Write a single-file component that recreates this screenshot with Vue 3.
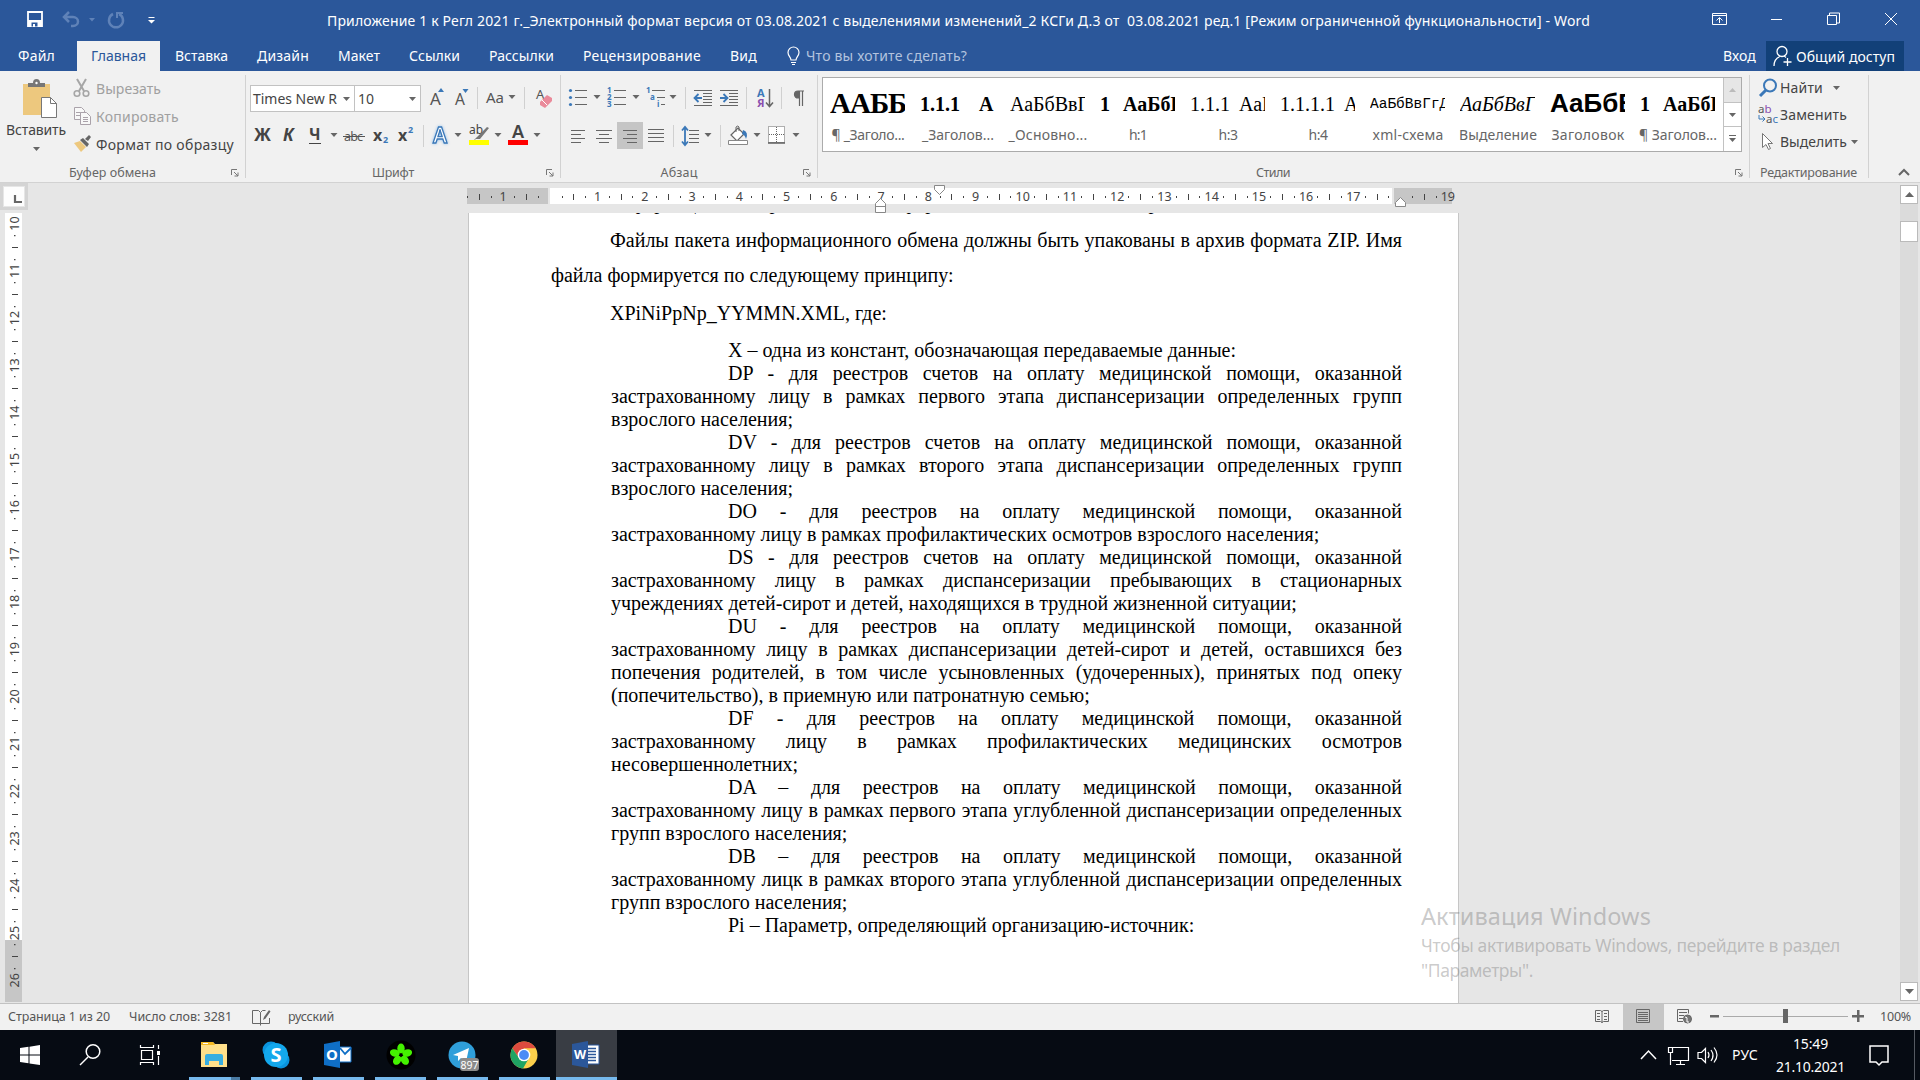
<script setup>
// Lays items out one after another: margin is the gap to the previous item's end
function flow(items, start) {
  let end = start
  return items.map(([x, w, v]) => {
    const item = { gap: x - end, w, v }
    end = x + w
    return item
  })
}
const box = (i) => ({ marginLeft: i.gap + 'px', width: i.w + 'px' })

// Tunes letter spacing so that a label takes exactly the given width
const vFit = {
  mounted(el, { value }) {
    const range = document.createRange()
    range.selectNodeContents(el)
    const natural = range.getBoundingClientRect().width
    el.style.letterSpacing = (value - natural) / el.textContent.length + 'px'
  },
}

const caret = '<path d="M-3.5 12h7l-3.5 4z" fill="#666"/>'
const sep = '<path d="M.5 4v22" stroke="#d0d0d0"/>'
const lines = (ys, x1, x2) => ys.map((y) => `<path d="M${x1} ${y + 0.5}H${x2}" stroke="#666"/>`).join('')
const sans = 'font-family="Noto Sans, sans-serif"'

const fontRow1 = flow([
  [431, 1, `<text y="22" font-size="17" fill="#555" ${sans}>A</text><path d="M8 9l3-4 3 4z" fill="#3b78b8"/>`],
  [456, 1, `<text y="22" font-size="15.500" fill="#555" ${sans}>A</text><path d="M7.500 6h6l-3 4z" fill="#3b78b8"/>`],
  [478, 1, sep],
  [487, 1, `<text y="20" font-size="15" fill="#555" ${sans}>Aa</text>`],
  [513, 1, caret],
  [525, 1, sep],
  [537, 1, `<text y="16" font-size="13" fill="#555" ${sans}>A</text><path d="M4 19l7-7 5 3v3l-7 7-5-3z" fill="#ea8a9a"/><path d="M6 17l5 5" stroke="#fff"/>`],
], 422)
const fontRow2 = flow([
  [254, 1, `<text y="20" font-size="17" font-weight="700" fill="#444" textLength="18" ${sans}>Ж</text>`],
  [283, 1, `<text y="20" font-size="17" font-weight="700" font-style="italic" fill="#444" ${sans}>К</text>`],
  [309, 1, `<text y="19" font-size="16" font-weight="700" fill="#444" ${sans}>Ч</text><path d="M0 22.500h12" stroke="#444"/>`],
  [334, 1, caret],
  [344, 1, `<text y="20" font-size="12.500" fill="#555" textLength="19" ${sans}>abc</text><path d="M-1 15.500h22" stroke="#555"/>`],
  [373, 1, `<text y="20" font-size="16" font-weight="700" fill="#444" ${sans}>x</text><text x="10" y="22" font-size="9" font-weight="700" fill="#3b78b8" ${sans}>2</text>`],
  [398, 1, `<text y="20" font-size="16" font-weight="700" fill="#444" ${sans}>x</text><text x="10" y="12" font-size="9" font-weight="700" fill="#3b78b8" ${sans}>2</text>`],
  [423, 1, sep],
  [433, 1, `<text y="22" font-size="21" font-weight="600" fill="#fff" stroke="#3b78b8" stroke-width="1.300" filter="drop-shadow(0 0 1.500px #8fbdea)" ${sans}>A</text>`],
  [458, 1, caret],
  [469, 1, `<text y="13" font-size="12" fill="#444" ${sans}>ab</text><path d="M18 6l2 1-9 11-4 0-3 2 4-4z" fill="#777"/><path d="M0 19h20v5H0z" fill="#ff0"/>`],
  [498, 1, caret],
  [508, 1, `<text x="4" y="17" font-size="18" font-weight="600" fill="#444" ${sans}>A</text><path d="M0 19h20v5H0z" fill="#f00"/>`],
  [537, 1, caret],
], 246)

const dot = (y) => `<circle cx="1.500" cy="${y + 0.5}" r="1.600" fill="#3b78b8"/>`
const num = (x, y, t) => `<text x="${x}" y="${y}" font-size="8" font-weight="700" fill="#3b78b8" ${sans}>${t}</text>`
const blockLines = lines([7, 22], 0, 18) + lines([10, 13, 16, 19], 9, 18)
const paraRow1 = flow([
  [569, 1, dot(7) + dot(14) + dot(21) + lines([7, 14, 21], 6, 18)],
  [597, 1, caret],
  [608, 1, num(-1, 10, 1) + num(-1, 17, 2) + num(-1, 24, 3) + lines([7, 14, 21], 6, 18)],
  [636, 1, caret],
  [647, 1, num(-1, 10, 1) + num(3, 17, 'a') + num(10, 24, 'i') + lines([7], 5, 18) + lines([14], 10, 18) + lines([21], 14, 18)],
  [673, 1, caret],
  [685, 1, sep],
  [694, 1, blockLines + '<path d="M8 15H1M4.500 11l-4 4 4 4" stroke="#3b78b8" stroke-width="1.800" fill="none"/>'],
  [720, 1, blockLines + '<path d="M0 15h7M3.500 11l4 4-4 4" stroke="#3b78b8" stroke-width="1.800" fill="none"/>'],
  [746, 1, sep],
  [757, 1, `<text y="14" font-size="11" font-weight="700" fill="#3b78b8" ${sans}>А</text><text y="24" font-size="11" font-weight="700" fill="#8a4fae" ${sans}>Я</text><path d="M12.500 6v17M9 19.500l3.500 4 3.500-4" stroke="#666" stroke-width="1.500" fill="none"/>`],
  [781, 1, sep],
  [793, 1, '<path d="M11 8H5a3.500 3.500 0 000 7h1M6.500 8v15M9.500 8v15" stroke="#666" stroke-width="1.200" fill="none"/><path d="M5 8h2v7H5a3.500 3.500 0 010-7z" fill="#666"/>'],
], 561)
const paraRow2 = flow([
  [571, 1, lines([9, 17], 0, 14) + lines([13, 21], 0, 10)],
  [596, 1, lines([9, 17], 0, 16) + lines([13, 21], 3, 13)],
  [617, 26, '<path d="M0 1h26v27H0z" fill="#c5c5c5"/>' + lines([9, 17], 6, 20) + lines([13, 21], 10, 20)],
  [648, 1, lines([8, 12, 16, 20], 0, 16)],
  [673, 1, sep],
  [682, 1, lines([9, 13, 17, 21], 7, 17) + '<path d="M3 7v16M0 9.500L3 6l3 3.500M0 20.500L3 24l3-3.500" stroke="#3b78b8" stroke-width="1.800" fill="none"/>'],
  [708, 1, caret],
  [720, 1, sep],
  [728, 1, '<path d="M3 14l7-7 6 6-7 7z" fill="#fff" stroke="#666" stroke-width="1.200"/><path d="M8 11V6q2-2 3 0v4" fill="none" stroke="#666"/><path d="M15 9q6 2 3 9-1-4-4-5z" fill="#3b78b8"/><path d="M.5 19.500h19v4H.5z" fill="#fff" stroke="#888"/>'],
  [757, 1, caret],
  [768, 1, '<path d="M.5 5.500h16v16H.5z" fill="#fff" stroke="#666" stroke-dasharray="1 1"/><path d="M8.500 6v15M1 13.500h15" stroke="#666" stroke-dasharray="1 1"/><path d="M0 22h17" stroke="#555" stroke-width="1.400"/>'],
  [796, 1, caret],
], 561)

const tabs = flow([
  [18, 37, 'Файл'], [77, 83, 'Главная'], [175, 53, 'Вставка'], [257, 52, 'Дизайн'],
  [338, 42, 'Макет'], [409, 51, 'Ссылки'], [489, 65, 'Рассылки'], [583, 118, 'Рецензирование'], [730, 27, 'Вид'],
], 0)

const styles = [
  ['ААББВВ', '¶ _Заголо...', 73, 's-big'],
  ['1.1.1\u2002 А', '_Заголов...', 72, 's-bold spread'],
  ['АаБбВвГг', '_Основно...', 79, 's-plain'],
  ['1\u2002 АаБбВ', 'h:1', 18, 's-bold tight'],
  ['1.1.1\u2002 АаБ', 'h:3', 19, 's-plain tighter'],
  ['1.1.1.1\u2002 Аа', 'h:4', 19, 's-plain tighter'],
  ['АаБбВвГгД', 'xml-схема', 71, 's-mono'],
  ['АаБбВвГг', 'Выделение', 78, 's-italic'],
  ['АаБбВ', 'Заголовок', 73, 's-sans'],
  ['1\u2002 АаБбВ', '¶ Заголов...', 78, 's-bold tight'],
]

const CM = 47.24
const hNumbers = [-1, 1, 2, 3, 4, 5, 6, 7, 8, 9, 10, 11, 12, 13, 14, 15, 16, 17, 19]
const hX = (n) => 549.8 - 467 + n * CM
const hTicks = Array.from({ length: 21 }, (_, i) => i - 2)
const vNumbers = Array.from({ length: 17 }, (_, i) => i + 10)
const vY = (n) => 10.5 + (n - 10) * 47.3

// Flags: i = first-line indent, j = justified line
const doc = [
  ['i', 'X – одна из констант, обозначающая передаваемые данные:'],
  ['ij', 'DP - для реестров счетов на оплату медицинской помощи, оказанной'],
  ['j', 'застрахованному лицу в рамках первого этапа диспансеризации определенных групп'],
  ['', 'взрослого населения;'],
  ['ij', 'DV - для реестров счетов на оплату медицинской помощи, оказанной'],
  ['j', 'застрахованному лицу в рамках второго этапа диспансеризации определенных групп'],
  ['', 'взрослого населения;'],
  ['ij', 'DO - для реестров на оплату медицинской помощи, оказанной'],
  ['', 'застрахованному лицу в рамках профилактических осмотров взрослого населения;'],
  ['ij', 'DS - для реестров счетов на оплату медицинской помощи, оказанной'],
  ['j', 'застрахованному лицу в рамках диспансеризации пребывающих в стационарных'],
  ['', 'учреждениях детей-сирот и детей, находящихся в трудной жизненной ситуации;'],
  ['ij', 'DU - для реестров на оплату медицинской помощи, оказанной'],
  ['j', 'застрахованному лицу в рамках диспансеризации детей-сирот и детей, оставшихся без'],
  ['j', 'попечения родителей, в том числе усыновленных (удочеренных), принятых под опеку'],
  ['', '(попечительство), в приемную или патронатную семью;'],
  ['ij', 'DF - для реестров на оплату медицинской помощи, оказанной'],
  ['j', 'застрахованному лицу в рамках профилактических медицинских осмотров'],
  ['', 'несовершеннолетних;'],
  ['ij', 'DA – для реестров на оплату медицинской помощи, оказанной'],
  ['j', 'застрахованному лицу в рамках первого этапа углубленной диспансеризации определенных'],
  ['', 'групп взрослого населения;'],
  ['ij', 'DB – для реестров на оплату медицинской помощи, оказанной'],
  ['j', 'застрахованному лицк в рамках второго этапа углубленной диспансеризации определенных'],
  ['', 'групп взрослого населения;'],
  ['i', 'Pi – Параметр, определяющий организацию-источник:'],
]

const apps = [
  ['folder', '<path d="M1 6V1h12l2 2h12v23H1z" fill="#ffe08a"/><path d="M1 1h12l2 3H1z" fill="#f5b921"/><path d="M3 2h5v1H3z" fill="#fff"/><path d="M5 24V15q0-2 2-2h14q2 0 2 2v9h-4v-4H9v4z" fill="#38aee0"/>'],
  ['skype', '<circle cx="9" cy="9" r="8.500" fill="#0a93dc"/><circle cx="19" cy="19" r="8.500" fill="#0a93dc"/><circle cx="14" cy="14" r="12" fill="#13a8ec"/><text x="14" y="21" font-size="20" font-weight="700" text-anchor="middle" fill="#fff" font-family="Noto Sans, sans-serif">S</text>'],
  ['outlook', '<path d="M15 6h12v15H15z" fill="#fff" stroke="#0f6fc6"/><path d="M16 7l5 6 6-6" fill="none" stroke="#0f6fc6" stroke-width="1.800"/><path d="M0 3l16-3v27L0 24z" fill="#0f6fc6"/><text x="8" y="19" font-size="15" font-weight="700" text-anchor="middle" fill="#fff" font-family="Noto Sans, sans-serif">O</text>'],
  ['icq', '<circle cx="14" cy="14" r="14.500" fill="#000"/><g fill="#44f200"><ellipse cx="14" cy="7.500" rx="3.700" ry="5"/><ellipse cx="14" cy="7.500" rx="3.700" ry="5" transform="rotate(72 14 14)"/><ellipse cx="14" cy="7.500" rx="3.700" ry="5" transform="rotate(144 14 14)"/><ellipse cx="14" cy="7.500" rx="3.700" ry="5" transform="rotate(216 14 14)"/><ellipse cx="14" cy="7.500" rx="3.700" ry="5" transform="rotate(288 14 14)"/></g><circle cx="14" cy="14" r="1.500" fill="#000"/>'],
  ['telegram', '<circle cx="14" cy="14" r="13.500" fill="#2f9fda"/><path d="M5 14l16-7-3 14-5-4-3 3v-5z" fill="#fff"/><rect x="12" y="17" width="19" height="13" rx="3" fill="#8b8b8b"/><text x="21.500" y="27.500" font-size="10.500" text-anchor="middle" fill="#fff" font-family="Noto Sans, sans-serif">897</text>'],
  ['chrome', '<circle cx="14" cy="14" r="13.500" fill="#fcd04b"/><path d="M2.300 7.200A13.500 13.500 0 0125.700 7.200H14L9 17z" fill="#dd4b3e"/><path d="M2.300 7.200A13.500 13.500 0 0013 27.500L19 17l-10 0z" fill="#1fa463"/><circle cx="14" cy="14" r="6.300" fill="#fff"/><circle cx="14" cy="14" r="4.900" fill="#4c8bf5"/>'],
  ['word', '<path d="M14 4h13v19H14z" fill="#fff" stroke="#2b579a"/><path d="M16 7.500h8M16 10.500h8M16 13.500h8M16 16.500h8M16 19.500h8" stroke="#2b579a" stroke-width="1.500"/><path d="M0 3l16-3v27L0 24z" fill="#2b579a"/><text x="8" y="18" font-size="12.500" font-weight="700" text-anchor="middle" fill="#fff" font-family="Noto Sans, sans-serif">W</text>'],
]
</script>

<template>
  <div class="screen">
    <header class="titlebar">
      <svg class="quick" width="180" height="40" fill="none">
        <path d="M28 12h14v14H28z" stroke="#fff" stroke-width="1.800" />
        <path d="M28 20h14v6H28z" fill="#fff" /><path d="M31.500 22.500h6v4h-6z" fill="#2b579a" /><path d="M33 24h2v3h-2z" fill="#fff" />
        <g stroke="#5f82b8"><path d="M65 17h8a5 4.500 0 010 9h-2M69 12l-5 5 5 5" stroke-width="2.500" /><path d="M113 14a7 7 0 106 0" stroke-width="2.500" /><path d="M117 18v-5h6" stroke-width="2" /></g>
        <path d="M89 18h6l-3 3.500z" fill="#5f82b8" />
        <path d="M148.500 17.500h6" stroke="#fff" /><path d="M148 20h7l-3.500 3.500z" fill="#fff" />
      </svg>
      <div class="doc-title"><span v-fit="1263">Приложение 1 к Регл 2021 г._Электронный формат версия от 03.08.2021 с выделениями изменений_2 КСГи Д.3 от&nbsp; 03.08.2021 ред.1 [Режим ограниченной функциональности] - Word</span></div>
      <svg class="window-buttons" width="220" height="40" fill="none" stroke="#fff">
        <path d="M12.500 13.500h14v11h-14zM12.500 15.500h14M19.500 23v-5M16.500 20.500l3-3 3 3" />
        <path d="M71 19.500h11" /><path d="M127.500 15.500h9v9h-9zM129.500 15v-2h10v10h-3" /><path d="M185 13l12 12M197 13l-12 12" />
      </svg>
    </header>

    <nav class="tabs">
      <div v-for="(t, i) in tabs" :key="t.v" class="tab" :class="{ active: i === 1 }" :style="box(t)">
        <span v-fit="i === 1 ? 55 : t.w">{{ t.v }}</span>
      </div>
      <svg class="bulb" width="14" height="20" fill="none" stroke="#fff"><path d="M4 14c0-3-3-4-3-7.500a5.500 5.500 0 0111 0C12 10 9 11 9 14z" stroke-width="1.200" /><path d="M4 16.500h5M5 18.500h3" /></svg>
      <span class="tell" v-fit="161">Что вы хотите сделать?</span>
      <span class="login" v-fit="33">Вход</span>
      <div class="share">
        <svg width="20" height="24" fill="none" stroke="#fff" stroke-width="1.300"><circle cx="9" cy="7.500" r="5" /><path d="M1 22c0-5 2-8 6-9.500M11 12q1 .5 2 1.500M14.500 14v8M10.500 18h8" /></svg>
        <span v-fit="99">Общий доступ</span>
      </div>
    </nav>

    <section class="ribbon">
      <div class="group clipboard">
        <div class="clip-body">
          <div class="paste">
            <svg width="36" height="42">
              <path d="M1 5h27v31H1z" fill="#edc87e" /><path d="M6 8V4h5q0-4 3.500-4T18 4h5v4z" fill="#777" /><circle cx="14.500" cy="4" r="1.200" fill="#fff" />
              <path d="M19.500 18.500h9l6 6v14h-15z" fill="#fff" stroke="#777" /><path d="M28.500 18.500v6h6" fill="none" stroke="#777" />
            </svg>
            <span class="paste-label" v-fit="60">Вставить</span>
            <svg class="paste-caret" width="7" height="4"><path d="M0 0h7L3.500 4z" fill="#666" /></svg>
          </div>
          <div class="clip-list">
            <div class="cmd off"><svg width="20" height="20" fill="none" stroke="#a6a6a6" stroke-width="1.600"><path d="M4 1l7 12M13 1L6 13" stroke-width="2" /><circle cx="4" cy="15.500" r="2.800" /><circle cx="13" cy="15.500" r="2.800" /></svg><span v-fit="65">Вырезать</span></div>
            <div class="cmd off"><svg width="20" height="20" fill="#f8f8f8" stroke="#aaa2aa"><path d="M1.500 1.500h7l3 3v9h-10zM3 6.500h5M3 9.500h5" /><path d="M7.500 6.500h6l4 4v8h-10zM10 11.500h5M10 13.500h5M10 15.500h5" /></svg><span v-fit="83">Копировать</span></div>
            <div class="cmd"><svg width="20" height="20"><path d="M1 9l6-2 6 6-5 5z" fill="#edc87e" /><path d="M7 6l3-2 6 6-2 3zM12 5l4-4 2 2-3 4z" fill="#666" /></svg><span v-fit="138">Формат по образцу</span></div>
          </div>
        </div>
        <div class="caption"><span v-fit="87">Буфер обмена</span></div>
        <svg class="launcher" width="8" height="8"><path d="M.5 6V.5H6M3 3l4 4M7 3.500V7H3.500" fill="none" stroke="#777" /></svg>
      </div>

      <div class="group font">
        <div class="tools">
          <div class="combo name"><span v-fit="84">Times New R</span><svg width="7" height="4"><path d="M0 0h7L3.500 4z" fill="#666" /></svg></div>
          <div class="combo size"><span>10</span><svg width="7" height="4"><path d="M0 0h7L3.500 4z" fill="#666" /></svg></div>
          <svg v-for="(t, i) in fontRow1" :key="i" class="tool" :style="box(t)" v-html="t.v"></svg>
        </div>
        <div class="tools second"><svg v-for="(t, i) in fontRow2" :key="i" class="tool" :style="box(t)" v-html="t.v"></svg></div>
        <div class="caption"><span v-fit="42">Шрифт</span></div>
        <svg class="launcher" width="8" height="8"><path d="M.5 6V.5H6M3 3l4 4M7 3.500V7H3.500" fill="none" stroke="#777" /></svg>
      </div>

      <div class="group para">
        <div class="tools"><svg v-for="(t, i) in paraRow1" :key="i" class="tool" :style="box(t)" v-html="t.v"></svg></div>
        <div class="tools second"><svg v-for="(t, i) in paraRow2" :key="i" class="tool" :style="box(t)" v-html="t.v"></svg></div>
        <div class="caption"><span v-fit="37">Абзац</span></div>
        <svg class="launcher" width="8" height="8"><path d="M.5 6V.5H6M3 3l4 4M7 3.500V7H3.500" fill="none" stroke="#777" /></svg>
      </div>

      <div class="group style-group">
        <div class="gallery">
          <div v-for="(s, i) in styles" :key="i" class="style-item">
            <div class="preview" :class="s[3]">{{ s[0] }}</div>
            <div class="style-name"><span v-fit="s[2]">{{ s[1] }}</span></div>
          </div>
          <div class="gallery-scroll">
            <div class="off"><svg width="7" height="4"><path d="M0 4h7L3.500 0z" fill="#bbb" /></svg></div>
            <div><svg width="7" height="4"><path d="M0 0h7L3.500 4z" fill="#666" /></svg></div>
            <div><svg width="7" height="8"><path d="M0 .5h7" stroke="#666" /><path d="M0 3h7L3.500 7z" fill="#666" /></svg></div>
          </div>
        </div>
        <div class="caption"><span v-fit="34">Стили</span></div>
        <svg class="launcher" width="8" height="8"><path d="M.5 6V.5H6M3 3l4 4M7 3.500V7H3.500" fill="none" stroke="#777" /></svg>
      </div>

      <div class="group edit">
        <div class="cmd"><svg width="22" height="20" fill="none" stroke="#3b78b8"><circle cx="12" cy="7.500" r="6" stroke-width="2" /><path d="M8 12l-6 6" stroke-width="3" /></svg><span v-fit="43">Найти</span><svg class="c1" width="7" height="4"><path d="M0 0h7L3.500 4z" fill="#666" /></svg></div>
        <div class="cmd"><svg width="22" height="20" font-family="Noto Sans, sans-serif" font-size="11.500"><text x="0" y="8" fill="#555">a<tspan fill="#8a4fae">b</tspan></text><text x="8" y="18" fill="#555">a<tspan fill="#3b78b8">c</tspan></text><path d="M1 10v4h6M4.500 11.500L7 14l-2.500 2.500" fill="none" stroke="#3b78b8" /></svg><span v-fit="67">Заменить</span></div>
        <div class="cmd"><svg width="22" height="20"><path d="M4.500 1.500v14l3.500-3 2.500 5 2-1-2.500-5h4.500z" fill="#fff" stroke="#777" /></svg><span v-fit="67">Выделить</span><svg class="c2" width="7" height="4"><path d="M0 0h7L3.500 4z" fill="#666" /></svg></div>
        <div class="caption"><span v-fit="97">Редактирование</span></div>
      </div>
      <svg class="collapse" width="12" height="8"><path d="M1 7l5-5 5 5" fill="none" stroke="#666" stroke-width="2" /></svg>
    </section>

    <main class="work">
      <div class="left-rail">
        <div class="tabstop"><div><svg width="20" height="20"><path d="M11 8v7h7" fill="none" stroke="#666" stroke-width="2.200" /></svg></div></div>
        <svg class="vruler" width="17" height="789">
          <path d="M0 0h17v727H0z" fill="#fff" /><path d="M0 727h17v62H0z" fill="#c6c6c6" />
          <g v-for="n in vNumbers" :key="n">
            <text :transform="`translate(13.5 ${vY(n)}) rotate(-90)`" text-anchor="middle" class="ruler-num">{{ n }}</text>
            <path v-if="n < 26" :d="`M9 ${Math.round(vY(n) + 11)}h1.500v1.200h-1.500zM9 ${Math.round(vY(n) + 35)}h1.500v1.200h-1.500zM7 ${Math.round(vY(n) + 23)}h6v1h-6z`" fill="#444" />
          </g>
        </svg>
      </div>

      <div class="center">
        <svg class="hruler" width="992" height="30">
          <path d="M0 5h81v16H0zM927 5h58v16h-58z" fill="#c6c6c6" /><path d="M83 5h842v16H83z" fill="#fff" />
          <g v-for="n in hTicks" :key="n" fill="#444">
            <path v-if="hX(n + .25) > 0" :d="`M${Math.round(hX(n + .25))} 13h1v2h-1z`" />
            <path v-if="hX(n + .5) > 0" :d="`M${Math.round(hX(n + .5))} 11h1v6h-1z`" />
            <path v-if="hX(n + .75) > 0" :d="`M${Math.round(hX(n + .75))} 13h1v2h-1z`" />
          </g>
          <text v-for="n in hNumbers" :key="'n' + n" :x="hX(n) + .5" y="18" text-anchor="middle" class="ruler-num">{{ Math.abs(n) }}</text>
          <g fill="#fff" stroke="#888"><path d="M467.500 2.500h10v4l-5 5-5-5z" /><path d="M408.500 29.500v-9l5-5 5 5v9zM408.500 23.500h10" /><path d="M928.500 23.500v-4l5-5 5 5v4z" /></g>
        </svg>
        <article class="page">
          <p class="cut i">информационном режиме имеет формат основной записи в режиме</p>
          <p class="wide j i">Файлы пакета информационного обмена должны быть упакованы в архив формата ZIP. Имя</p>
          <p class="wide">файла формируется по следующему принципу:</p>
          <p class="mask i">XPiNiPpNp_YYMMN.XML, где:</p>
          <div class="list">
            <p v-for="(l, k) in doc" :key="k" :class="l[0].split('')">{{ l[1] }}</p>
          </div>
        </article>
      </div>

      <aside class="scrollbar">
        <div class="sb up"><svg width="9" height="5"><path d="M0 5h9L4.500 0z" fill="#666" /></svg></div>
        <div class="sb thumb"></div>
        <div class="sb down"><svg width="9" height="5"><path d="M0 0h9L4.500 5z" fill="#666" /></svg></div>
      </aside>
      <div class="watermark">
        <div class="w-title"><span v-fit="230">Активация Windows</span></div>
        <div><span v-fit="419">Чтобы активировать Windows, перейдите в раздел</span></div>
        <div><span v-fit="112">"Параметры".</span></div>
      </div>
    </main>

    <footer class="status">
      <span class="s1" v-fit="102">Страница 1 из 20</span>
      <span class="s2" v-fit="103">Число слов: 3281</span>
      <svg class="proof" width="19" height="18" fill="none" stroke="#666"><path d="M8.500 15.500h-8v-13h6l2 2v13M8.500 4.500l2-2h3M17.500 10v5.500h-9" /><path d="M11 12l1-3 5-7 1.500 1.500-5 7z" fill="#666" stroke="none" /></svg>
      <span class="s3" v-fit="46">русский</span>
      <div class="views">
        <svg width="41" height="26" fill="none" stroke="#666"><path d="M13.500 6.500h5l1.500 1 1.500-1h5v11h-5l-1.500 1-1.500-1h-5zM20 7v12M15 9.500h3M15 12.500h3M15 15.500h3M22 9.500h3M22 12.500h3M22 15.500h3" /></svg>
        <svg class="on" width="41" height="26" fill="none" stroke="#666"><path d="M13.500 5.500h13v13h-13zM15 8.500h10M15 10.500h10M15 12.500h10M15 14.500h10M15 16.500h10" /></svg>
        <svg width="41" height="26" fill="none" stroke="#666"><path d="M19 17.500h-5.500v-12h11v4M15 8.500h8M15 11.500h5M15 14.500h4" /><circle cx="23.500" cy="15" r="4" fill="#777" /><path d="M21 13q3 0 2 3t2 2" stroke="#fff" /></svg>
      </div>
      <svg class="zoom" width="156" height="26"><path d="M0 11h9v2.500H0zM142 11h12v2.500h-12zM147 6h2.500v12H147z" fill="#666" /><path d="M13 12.500h125" stroke="#aaa" /><path d="M73 5h5v14h-5z" fill="#666" /></svg>
      <span class="percent" v-fit="31">100%</span>
    </footer>

    <footer class="taskbar">
      <svg class="system" width="189" height="50" fill="none" stroke="#fff">
        <path d="M20 18l8.500-1.200v7.700H20zM29.500 16.700L40 15v9.500H29.500zM20 25.500h8.500v7.700L20 32zM29.500 25.500H40V35l-10.500-1.600z" fill="#fff" stroke="none" />
        <circle cx="93" cy="21.500" r="6.800" stroke-width="1.500" /><path d="M88 27l-8 8" stroke-width="1.500" />
        <path d="M141.500 20.500h11v9h-11zM140.500 15v2.500h13V15M140.500 35v-2.500h13V35M158.500 15v4M158.500 26v9" stroke-width="1.200" /><path d="M157 21h3v4h-3z" fill="#fff" stroke="none" />
      </svg>
      <div class="apps">
        <div v-for="a in apps" :key="a[0]" class="app" :class="a[0]"><svg width="28" height="28" v-html="a[1]"></svg></div>
      </div>
      <svg class="tray" width="84" height="50" fill="none" stroke="#fff">
        <path d="M1 29l7.500-8 7.500 8" stroke-width="1.500" /><path d="M32 17.500h16.500v13H32M36 34.500h9M40.500 31v3M28.500 17.500h4v5h-4zM30.500 23v12" stroke-width="1.200" />
        <path d="M58 22.500h3.500l4-4v14l-4-4H58zM68 22q2 3 0 6M71 20q4 5.500 0 11M74 17.500q6 7.500 0 15" stroke-width="1.200" />
      </svg>
      <span class="lang" v-fit="26">РУС</span>
      <div class="clock"><span v-fit="35">15:49</span><span v-fit="69">21.10.2021</span></div>
      <svg class="notify" width="20" height="22" fill="none" stroke="#fff" stroke-width="1.500"><path d="M1 1h18v16h-6l-3 3-3-3H1z" /></svg>
      <div class="peek"></div>
    </footer>
  </div>
</template>

<style>
body { margin: 0; }
</style>

<style scoped>
.screen { width: 1920px; height: 1080px; overflow: hidden; display: flex; flex-direction: column; font: 14px "Noto Sans", sans-serif; color: #444; background: #e6e6e6; }
.screen * { box-sizing: border-box; }
svg { display: block; flex: none; overflow: visible; }
span { white-space: pre; }
p { margin: 0; }
.titlebar { height: 41px; background: #2b579a; display: flex; color: #fff; flex: none; }
.doc-title { width: 1520px; padding-left: 147px; line-height: 41px; }
.tabs { height: 30px; background: #2b579a; display: flex; color: #fff; flex: none; line-height: 30px; }
.tab { flex: none; white-space: nowrap; }
.tab.active { background: #f1f1f1; color: #2b579a; text-align: center; }
.bulb { margin: 5px 0 0 30px; }
.tell { margin-left: 5px; width: 161px; color: #b4c4df; }
.login { margin-left: 756px; width: 33px; }
.share { margin-left: 10px; width: 138px; background: #124078; display: flex; padding-left: 7px; line-height: 31px; }
.share svg { margin: 3px 3px 0 0; }

.ribbon { height: 112px; flex: none; background: #f1f1f1; border-bottom: 1px solid #d2d2d2; display: flex; }
.group { position: relative; display: flex; flex-direction: column; height: 111px; flex: none; }
.group::after { content: ""; position: absolute; right: 0; top: 4px; width: 1px; height: 103px; background: #d2d2d2; }
.caption { margin-top: auto; height: 19px; line-height: 19px; font-size: 12.5px; color: #666; display: flex; justify-content: center; }
.launcher { position: absolute; right: 7px; bottom: 5px; }
.clipboard { width: 246px; }
.font { width: 315px; }
.para { width: 257px; }
.style-group { width: 932px; }
.edit { width: 119px; padding-top: 3px; }
.clipboard .caption { padding-right: 21px; }
.font .caption { padding-right: 21px; }
.para .caption { padding-right: 21px; }
.style-group .caption { padding-right: 22px; }
.edit .caption { padding-right: 2px; }
.clip-body { display: flex; }
.paste { width: 73px; padding: 8px 0 0 6px; display: flex; flex-direction: column; }
.paste > svg:first-child { margin-left: 16px; }
.paste-label { line-height: 18px; }
.paste-caret { margin: 8px 0 0 27px; }
.clip-list { padding-top: 3px; }
.cmd { display: flex; align-items: center; height: 28px; }
.cmd svg { margin-right: 3px; }
.cmd.off { color: #a0a0a0; }
.tools { display: flex; height: 28px; margin-top: 12px; }
.tools.second { margin-top: 10px; }
.tool { height: 28px; }
.combo { height: 27px; margin-top: 2px; background: #fff; border: 1px solid #c2c2c2; display: flex; align-items: center; justify-content: space-between; padding: 0 4px; }
.combo.name { width: 105px; margin-left: 4px; padding-left: 2px; }
.combo.size { width: 67px; margin-left: -1px; padding-left: 3px; }
.gallery { margin: 6px 0 0 4px; width: 920px; height: 75px; border: 1px solid #ababab; background: #fff; display: flex; }
.style-item { width: 90px; flex: none; }
.preview { height: 44px; line-height: 53px; margin-left: 7px; width: 75px; overflow: hidden; white-space: pre; color: #000; font-family: "Liberation Serif", serif; font-size: 20px; }
.s-big { font-size: 29px; font-weight: 700; line-height: 50px; letter-spacing: -1px; }
.s-bold { font-weight: 700; }
.spread { word-spacing: 4px; }
.tight { word-spacing: -2px; }
.tighter { word-spacing: -6px; }
.s-italic { font-style: italic; }
.s-mono { font-family: "Liberation Mono", monospace; font-size: 14.5px; }
.s-sans { font-family: "Liberation Sans", sans-serif; font-weight: 700; font-size: 26px; line-height: 50px; }
.style-name { display: flex; justify-content: center; line-height: 26px; color: #666; }
.gallery-scroll { margin-left: auto; width: 18px; border-left: 1px solid #c2c2c2; display: flex; flex-direction: column; }
.gallery-scroll div { flex: 1; display: flex; align-items: center; justify-content: center; border-bottom: 1px solid #c2c2c2; }
.gallery-scroll div:last-child { border: 0; }
.gallery-scroll .off { background: #e6e6e6; }
.edit .cmd { height: 27px; padding-left: 8px; }
.edit .cmd svg { margin-right: 0; }
.edit .cmd .c1 { margin-left: 10px; }
.edit .cmd .c2 { margin-left: 4px; }
.collapse { margin: 97px 0 0 29px; }

.work { height: 820px; flex: none; display: flex; position: relative; overflow: hidden; }
.left-rail { width: 467px; flex: none; }
.tabstop { width: 28px; height: 27px; background: #d4d4d4; padding: 3px 0 0 3px; }
.tabstop div { width: 22px; height: 21px; background: #fdfdfd; border: 1px solid #e6e6e6; }
.vruler { margin: 3px 0 0 5px; }
.ruler-num { font: 12.5px "Noto Sans", sans-serif; fill: #444; }
.center { width: 992px; flex: none; }
.hruler { position: relative; z-index: 1; }
.page { width: 991px; height: 790px; background: #fff; border: solid #c6c6c6; border-width: 0 1px; margin-left: 1px; padding: 0 56px 0 82px; font: 20px/23px "Liberation Serif", serif; color: #000; overflow: hidden; }
.page p { white-space: nowrap; }
.j { text-align-last: justify; }
.i { text-indent: 59px; }
.cut { height: 32px; margin-top: -22px; word-spacing: 4px; }
.wide { line-height: 35px; }
.mask { margin-top: 9px; }
.list { padding-left: 60px; margin-top: 14px; }
.list .i { text-indent: 117px; }
.scrollbar { margin: 2px 2px 0 auto; width: 18px; height: 816px; background: #dbdbdb; display: flex; flex-direction: column; }
.sb { background: #fff; border: 1px solid #bababa; height: 19px; display: flex; align-items: center; justify-content: center; }
.thumb { height: 21px; margin-top: 17px; }
.down { margin-top: auto; }
.watermark { position: absolute; left: 1421px; top: 715px; color: rgba(120, 120, 120, .4); font-size: 17.5px; line-height: 25px; }
.w-title { font-size: 23.5px; line-height: 36px; margin-bottom: -1px; }

.status { height: 27px; flex: none; border-top: 1px solid #c2c2c2; background: #f1f1f1; display: flex; font-size: 12.5px; line-height: 26px; color: #555; }
.s1 { margin-left: 8px; width: 121px; }
.s2 { width: 123px; }
.proof { margin-top: 4px; }
.s3 { margin-left: 17px; width: 47px; }
.views { display: flex; margin-left: auto; }
.views .on { background: #c6c6c6; }
.zoom { margin-left: 5px; }
.percent { margin: 0 9px 0 14px; width: 31px; }

.taskbar { height: 50px; flex: none; background: #060b13; display: flex; color: #fff; }
.apps { display: flex; }
.app { width: 51px; margin-right: 11px; border-bottom: 3px solid #76b9ed; padding: 11px 0 0 11px; }
.folder { border-image: linear-gradient(90deg, #76b9ed 40px, #4a7ba3 40px) 3; }
.icq { padding-left: 12px; }
.chrome { margin-right: 6px; }
.word { width: 61px; margin: 0; padding-left: 16px; background: #393d44; }
.tray { margin-left: auto; }
.lang { margin-left: 8px; width: 26px; line-height: 50px; }
.clock { width: 69px; margin-left: 18px; display: flex; flex-direction: column; align-items: center; line-height: 23px; padding-top: 2px; }
.notify { margin: 15px 0 0 24px; }
.peek { width: 6px; margin-left: 25px; border-left: 1px solid #555a62; }
</style>
